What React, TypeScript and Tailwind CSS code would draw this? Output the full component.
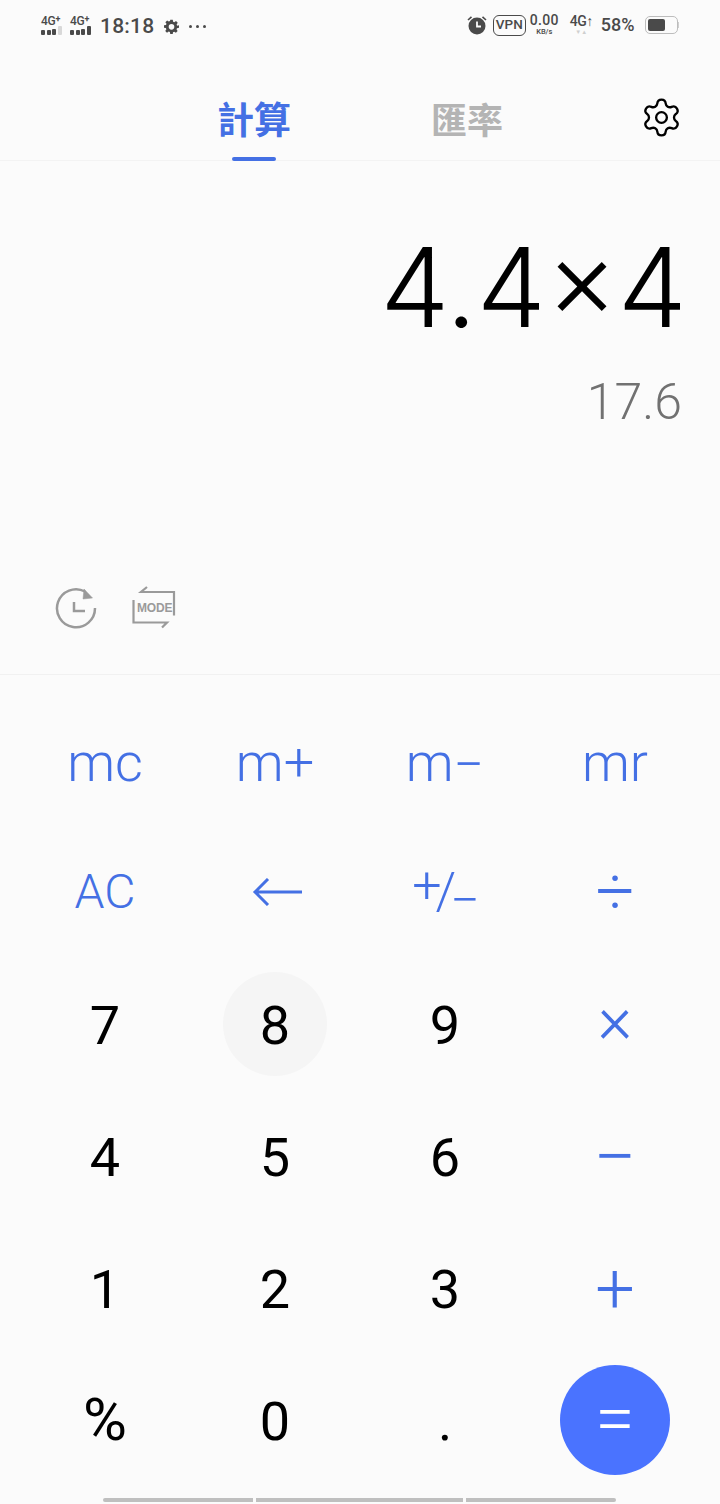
import React from "react";
import { Settings } from "lucide-react";

const BLUE = "text-[#4470e4]";

const SignalBars: React.FC<{ dim?: boolean }> = ({ dim }) => (
  <div className="flex items-end gap-[1.5px]">
    <div className="h-[5px] w-[4px] rounded-[1px] bg-[#4a4a4a]" />
    <div className="h-[5px] w-[4px] rounded-[1px] bg-[#4a4a4a]" />
    <div className="h-[6px] w-[4px] rounded-[1px] bg-[#4a4a4a]" />
    <div className={`h-[9px] w-[4px] rounded-[1px] ${dim ? "bg-[#d8d8d8]" : "bg-[#4a4a4a]"}`} />
  </div>
);

const Signal: React.FC<{ dim?: boolean }> = ({ dim }) => (
  <div className="flex w-[21px] -translate-y-[1px] flex-col items-start">
    <span className="h-[10px] whitespace-nowrap text-[12px] font-medium leading-[10px] tracking-[-0.3px] text-[#4a4a4a]">
      4G<span className="relative top-[-3px] text-[9px] font-bold leading-none">+</span>
    </span>
    <SignalBars dim={dim} />
  </div>
);

const StatusBar: React.FC = () => (
  <div className="flex h-[52px] items-start justify-between pl-[41px] pr-[41px] pt-[14px] text-[#4a4a4a]">
    <div className="flex items-center">
      <Signal dim />
      <div className="ml-[8px]">
        <Signal />
      </div>
      <span className="ml-[9px] text-[21px] font-medium leading-[24px] tracking-[0.2px]">18:18</span>
      <svg className="ml-[10px]" width="15" height="15" viewBox="0 0 24 24" fill="#4a4a4a">
        <path
          fillRule="evenodd"
          d="M10 1h4l.6 3.2 1.900.8 2.700-1.800 2.800 2.800-1.800 2.700.8 1.900L24 10v4l-3.200.6-.8 1.900 1.800 2.700-2.800 2.800-2.700-1.800-1.900.8L14 24h-4l-.6-3.200-1.900-.8-2.700 1.800L2 19l1.800-2.700-.8-1.900L0 14v-4l3.200-.6.8-1.900L2.200 5 5 2.200l2.700 1.800 1.900-.8L10 1zm2 7a4.500 4.500 0 100 9 4.500 4.500 0 000-9z"
        />
      </svg>
      <div className="ml-[10px] flex gap-[4px]">
        <div className="h-[3px] w-[3px] rounded-full bg-[#4a4a4a]" />
        <div className="h-[3px] w-[3px] rounded-full bg-[#4a4a4a]" />
        <div className="h-[3px] w-[3px] rounded-full bg-[#4a4a4a]" />
      </div>
    </div>
    <div className="flex items-center">
      <svg width="20" height="20" viewBox="0 0 20 20">
        <circle cx="10" cy="11" r="8.500" fill="#4a4a4a" />
        <path d="M10 6.500V11.500H14" stroke="#fbfbfb" strokeWidth="1.800" fill="none" />
        <path d="M1 5L4.500 1.800M19 5L15.500 1.800" stroke="#4a4a4a" strokeWidth="1.600" />
      </svg>
      <div className="ml-[6px] flex h-[21px] w-[33px] items-center justify-center rounded-[6px] border-[1.5px] border-[#4a4a4a] text-[13.5px] font-medium leading-none">
        VPN
      </div>
      <div className="ml-[4px] flex w-[29px] flex-col items-center">
        <span className="text-[14px] font-medium leading-[13px] tracking-[0.3px]">0.00</span>
        <span className="text-[7.5px] font-medium leading-[9px]">KB/s</span>
      </div>
      <div className="ml-[11px] flex w-[23px] flex-col items-center">
        <span className="whitespace-nowrap text-[14px] font-medium leading-[13px] tracking-[-0.4px]">4G↑</span>
        <span className="text-[6px] leading-[7px] text-[#cfcfcf]">▼▲</span>
      </div>
      <span className="ml-[8px] text-[18px] font-medium leading-[20px]">58%</span>
      <div className="ml-[10px] flex items-center">
        <div className="flex h-[18px] w-[33px] items-center rounded-[5px] border-[1.5px] border-[#bdbdbd] pl-[2px]">
          <div className="h-[12px] w-[17px] rounded-[2px] bg-[#4a4a4a]" />
        </div>
        <div className="h-[6px] w-[1.5px] bg-[#cfcfcf]" />
      </div>
    </div>
  </div>
);

const Tabs: React.FC = () => (
  <div className="relative flex h-[109px] border-b border-[#f3f3f3] pl-[218px] [font-family:'Noto_Sans_CJK_TC',sans-serif]">
    <div className="relative flex h-full w-[72px] flex-col items-center pt-[41px]">
      <span className={`whitespace-nowrap text-[37px] font-bold leading-[50px] ${BLUE}`}>計算</span>
      <div className="absolute bottom-[-1px] h-[4px] w-[44px] rounded-full bg-[#4470e4]" />
    </div>
    <div className="ml-[141px] pt-[41px]">
      <span className="whitespace-nowrap text-[36px] font-bold leading-[50px] text-[#b4b4b4]">匯率</span>
    </div>
    <Settings
      className="absolute right-[37px] top-[44px] text-black"
      size={43}
      strokeWidth={1.3}
    />
  </div>
);

const HistoryIcon: React.FC = () => (
  <svg width="42" height="42" viewBox="0 0 42 42" fill="none" stroke="#9a9a9a">
    <path d="M40 21A19 19 0 1 1 30 4.500" strokeWidth="2.500" />
    <path d="M29 2L37.500 11L28 12z" fill="#9a9a9a" strokeWidth="0.500" />
    <path d="M19 15V24H30" strokeWidth="2.500" />
  </svg>
);

const ModeIcon: React.FC = () => (
  <div className="relative h-[44px] w-[44px]">
    <svg width="44" height="44" viewBox="0 0 44 44" fill="none" stroke="#9a9a9a" strokeWidth="2.200">
      <path d="M15 1L9 6H42V29.500" />
      <path d="M1.500 14V36.500H35L30 41.500" />
    </svg>
    <span className="absolute left-[5px] top-[14px] text-[12px] font-bold leading-[16px] tracking-[-0.2px] text-[#9a9a9a] [font-family:'Liberation_Sans',sans-serif]">
      MODE
    </span>
  </div>
);

const Display: React.FC = () => (
  <div className="flex h-[514px] flex-col border-b border-[#f1f1f1]">
    <div className="flex flex-col items-end pr-[38px] pt-[62px]">
      <span className="mr-[-5px] text-[110px] font-light leading-[128px] text-black [font-family:Inter,sans-serif]">
        4.4×4
      </span>
      <span className="mt-[21px] text-[50px] font-light leading-[60px] text-[#717171]">17.6</span>
    </div>
    <div className="mt-auto mb-[44px] flex items-center gap-[35px] pl-[55px]">
      <HistoryIcon />
      <ModeIcon />
    </div>
  </div>
);

const MEM = `translate-y-[3px] text-[54px] font-light ${BLUE}`;
const NUM = "translate-y-[2px] text-[54px] text-black";
const OP = `font-light ${BLUE}`;

const keys: { label: React.ReactNode; id: string; cls: string }[] = [
  { id: "mc", label: "mc", cls: MEM },
  { id: "m+", label: "m+", cls: MEM },
  {
    id: "m-",
    label: (
      <span className="flex items-center">
        <span>m</span>
        <span className="translate-y-[2px]">−</span>
      </span>
    ),
    cls: MEM,
  },
  { id: "mr", label: "mr", cls: MEM },
  { id: "ac", label: "AC", cls: `text-[48px] font-light ${BLUE}` },
  {
    id: "back",
    label: (
      <svg width="50" height="28" viewBox="0 0 50 28" fill="none" stroke="#4470e4" strokeWidth="3">
        <path d="M50 14H3M16 1L3 14L16 27" />
      </svg>
    ),
    cls: "translate-x-[2px]",
  },
  {
    id: "sign",
    label: (
      <span className="flex translate-x-[1px] items-center">
        <span className="-translate-y-[6px]">+</span>
        <span className="ml-[-6px]">/</span>
        <span className="ml-[-6px] translate-y-[9px]">−</span>
      </span>
    ),
    cls: `text-[52px] ${OP}`,
  },
  { id: "div", label: "÷", cls: `text-[68px] ${OP}` },
  { id: "7", label: "7", cls: NUM },
  { id: "8", label: "8", cls: NUM },
  { id: "9", label: "9", cls: NUM },
  { id: "mul", label: "×", cls: `-translate-y-[4px] text-[66px] ${OP}` },
  { id: "4", label: "4", cls: NUM },
  { id: "5", label: "5", cls: NUM },
  { id: "6", label: "6", cls: NUM },
  { id: "sub", label: "−", cls: `translate-y-[1px] text-[76px] ${OP}` },
  { id: "1", label: "1", cls: NUM },
  { id: "2", label: "2", cls: NUM },
  { id: "3", label: "3", cls: NUM },
  { id: "add", label: "+", cls: `translate-y-[1px] text-[70px] ${OP}` },
  { id: "pct", label: "%", cls: "text-[60px] text-black" },
  { id: "0", label: "0", cls: NUM },
  { id: "dot", label: ".", cls: NUM },
];

const Keypad: React.FC = () => (
  <div className="grid grid-cols-[repeat(4,170px)] auto-rows-[132px] pl-[20px] pt-[19px]">
    {keys.map((key) => (
      <div key={key.id} className="relative flex items-center justify-center">
        {key.id === "8" && (
          <div className="absolute h-[104px] w-[104px] rounded-full bg-[#f5f5f5]" />
        )}
        <span className={`relative leading-none ${key.cls}`}>{key.label}</span>
      </div>
    ))}
    <div className="flex items-center justify-center">
      <div className="flex h-[110px] w-[110px] items-center justify-center rounded-full bg-[#4a73ff] text-[72px] font-light leading-none text-white">
        <span className="-translate-y-[1px]">=</span>
      </div>
    </div>
  </div>
);

const GestureBar: React.FC = () => (
  <div className="mt-[12px] flex gap-[3px] pl-[103px]">
    <div className="h-[4px] w-[150px] rounded-l-full bg-[#bfbfbf]" />
    <div className="h-[4px] w-[207px] bg-[#bfbfbf]" />
    <div className="h-[4px] w-[150px] rounded-r-full bg-[#bfbfbf]" />
  </div>
);

const App: React.FC = () => (
  <div className="h-[1504px] w-[720px] overflow-hidden bg-[#fbfbfb] [font-family:Roboto,sans-serif]">
    <StatusBar />
    <Tabs />
    <Display />
    <Keypad />
    <GestureBar />
  </div>
);

export default App;
